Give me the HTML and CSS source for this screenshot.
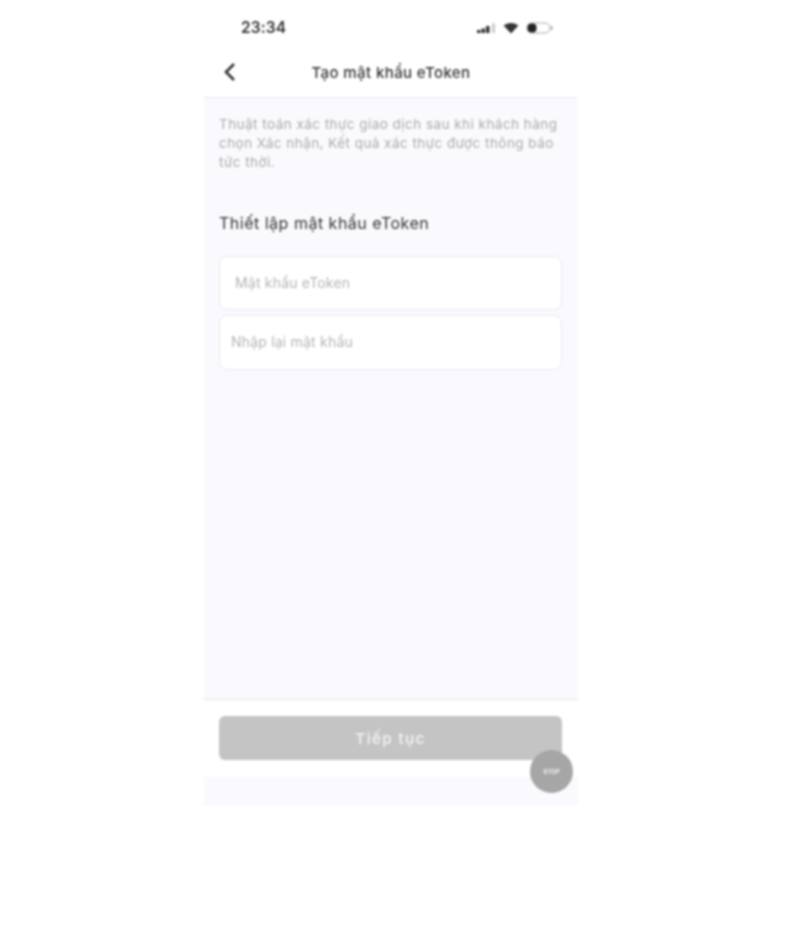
FILE: index.html
```html
<!DOCTYPE html>
<html lang="vi">
<head>
    <meta charset="UTF-8">
    <title>Tạo mật khẩu eToken</title>
    <link rel="stylesheet" href="styles.css">
</head>
<body>
<div class="phone">
    <div class="status">
        <span class="time">23:34</span>
        <div class="status-icons">
            <svg width="20" height="12" viewBox="0 0 20 12">
                <rect x="1" y="8" width="3.5" height="3" fill="#333"/>
                <rect x="5.5" y="6.5" width="3.5" height="4.5" fill="#333"/>
                <rect x="10" y="4" width="3.5" height="7" fill="#333"/>
                <rect x="16" y="1.5" width="3" height="9.5" fill="#ccc"/>
            </svg>
            <svg width="16" height="12" viewBox="0 0 16 12">
                <path d="M8 11.5 0.6 3.6C4.8 0 11.2 0 15.4 3.6Z" fill="#333"/>
            </svg>
            <svg width="27" height="12" viewBox="0 0 27 12">
                <rect x="1" y="1" width="23" height="10" rx="5" fill="#fff" stroke="#aaa"/>
                <rect x="1.5" y="1.5" width="9" height="9" rx="4" fill="#222"/>
                <rect x="25" y="4" width="1.5" height="4" fill="#aaa"/>
            </svg>
        </div>
    </div>
    <div class="nav">
        <svg class="back" width="14" height="20" viewBox="0 0 14 20">
            <path d="M11 2 3 10l8 8" fill="none" stroke="#333" stroke-width="2.6"/>
        </svg>
        <div class="nav-title">Tạo mật khẩu eToken</div>
    </div>
    <div class="content">
        <p class="desc">Thuật toán xác thực giao dịch sau khi khách hàng chọn Xác nhận, Kết quả xác thực được thông báo tức thời.</p>
        <h2 class="heading">Thiết lập mật khẩu eToken</h2>
        <div class="field field-first">Mật khẩu eToken</div>
        <div class="field">Nhập lại mật khẩu</div>
    </div>
    <div class="footer">
        <div class="next-btn">Tiếp tục</div>
        <div class="stop">STOP</div>
    </div>
    <div class="bottom"></div>
</div>
</body>
</html>
```

FILE: styles.css
```css
*{
    margin: 0;
    padding: 0;
    box-sizing: border-box;
}
body{
    background-color: #fff;
    font-family: Inter, "Liberation Sans", sans-serif;
}
.phone{
    width: 374px;
    margin-left: 204px;
    filter: blur(0.8px);
}
.status{
    height: 54px;
    display: flex;
    justify-content: space-between;
    align-items: center;
    padding: 1px 25px 0 37px;
}
.time{
    font-size: 15.5px;
    font-weight: 600;
    letter-spacing: 0.1px;
    color: #333;
}
.status-icons{
    display: flex;
    align-items: center;
    gap: 7px;
}
.nav{
    height: 44px;
    position: relative;
    display: flex;
    align-items: center;
    justify-content: center;
    border-bottom: 1px solid #e9e9ee;
}
.back{
    position: absolute;
    left: 19px;
    top: 8px;
}
.nav-title{
    font-size: 15px;
    font-weight: 500;
    letter-spacing: 0.4px;
    color: #333;
    margin-bottom: 6px;
}
.content{
    height: 601px;
    background-color: #fafafe;
    padding: 17px 16px 0 15px;
}
.desc{
    font-size: 13.5px;
    letter-spacing: 0.46px;
    line-height: 19px;
    color: #aaa;
}
.heading{
    font-size: 16px;
    font-weight: 400;
    letter-spacing: 0.5px;
    color: #333;
    line-height: 20px;
    margin-top: 41px;
}
.field{
    height: 55px;
    margin-top: 5px;
    background-color: #fff;
    border: 1px solid #e8e8f0;
    border-radius: 8px;
    font-size: 14px;
    letter-spacing: 0.2px;
    color: #b5b5b5;
    line-height: 52px;
    padding-left: 11px;
}
.field-first{
    height: 54px;
    margin-top: 23px;
    padding-left: 15px;
}
.footer{
    height: 78px;
    position: relative;
    background-color: #fff;
    border-top: 1px solid #e4e4e9;
    padding: 16px 16px 0 15px;
}
.next-btn{
    height: 44px;
    border-radius: 6px;
    background-color: #c4c4c4;
    color: #eee;
    font-size: 15px;
    font-weight: 600;
    letter-spacing: 1.4px;
    text-align: center;
    line-height: 46px;
}
.stop{
    position: absolute;
    left: 326px;
    top: 50px;
    width: 43px;
    height: 43px;
    border-radius: 50%;
    background-color: #a6a6a6;
    color: #eee;
    font-size: 6px;
    font-weight: 700;
    text-align: center;
    line-height: 43px;
}
.bottom{
    height: 29px;
    background-color: #fafafe;
}
```
